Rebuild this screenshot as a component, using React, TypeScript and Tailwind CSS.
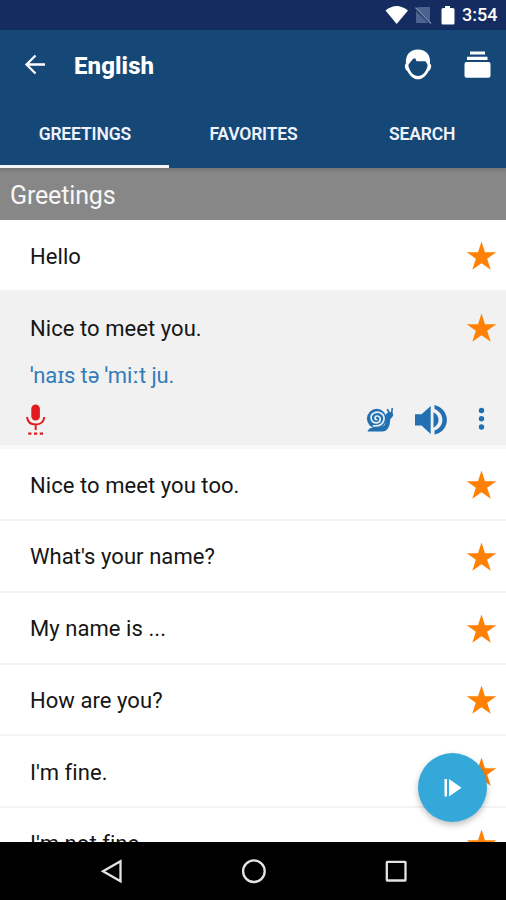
import React from "react";

const Star = () => (
  <svg className="h-[30px] w-[31px] shrink-0" viewBox="0 0 31 30">
    <path fill="#ff8106" d="M15.5 0.5 19 11.2H30.3L21.2 17.7 24.7 28.8 15.5 22.2 6.3 28.8 9.8 17.7 0.7 11.2H12Z" />
  </svg>
);

const StatusBar = () => (
  <div className="flex h-[30px] items-center justify-end bg-[#152c60] pr-[9px]">
    <svg className="h-[30px] w-[76px]" viewBox="382 0 76 30">
      <path fill="#fff" d="M385.5 10.5Q396.500 1.500 408 10.500L396.700 24Z" />
      <path fill="#4d638f" d="M430 7V21L417 8.500 418.500 7ZM416 11 428.500 23H416Z" />
      <path d="M415.500 7.500 431 23.500" stroke="#7488ab" strokeWidth="1.500" />
      <path fill="#fff" d="M445 6h5v2h3q1.500 0 1.500 1.500v13.500q0 1.500-1.500 1.500h-10q-1.500 0-1.500-1.500v-13.500q0-1.500 1.500-1.500h2z" />
    </svg>
    <span className="ml-[4px] w-[35px] whitespace-nowrap text-[18px] font-medium leading-[32px] text-white">3:54</span>
  </div>
);

const AppBar = () => (
  <div className="flex h-[70px] items-center pl-[23px] pr-[15px] text-white">
    <svg className="h-[24px] w-[24px]" viewBox="0 0 24 24" fill="none" stroke="#fff" strokeWidth="2.300">
      <path d="M22 11.500H4M12.500 2.500 3.500 11.500 12.500 20.500" />
    </svg>
    <h1 className="ml-[27px] pt-[2px] text-[24px] font-extrabold tracking-[0.1px]">English</h1>
    <svg className="ml-auto h-[32px] w-[30px]" viewBox="403 49 30 32">
      <path fill="#fff" fillRule="evenodd" d="M418 49.500C426 49.500 430.800 55 430 63.500Q432 65.500 430.700 68.500 430 70.500 428.300 71.500C426 76 422.500 79.300 418 79.300S410 76 407.700 71.500Q406 70.500 405.300 68.500 404 65.500 406 63.500C405.200 55 410 49.500 418 49.500ZM412.500 59.500 408.500 64.500Q408 66 409.500 69C411 73 414 76 418 76S425 73 426.500 69Q428 66 427.500 64.500L425.500 61.300H416.500L415.500 58.500 413.500 58.500Z" />
    </svg>
    <svg className="ml-[30px] h-[28px] w-[28px]" viewBox="463 51 28 28">
      <path fill="#fff" d="M470 51.500h15v3h-15zM467 56.700h20.500v3.200H467z" />
      <rect x="464.500" y="62" width="26" height="15.700" rx="2" fill="#fff" />
    </svg>
  </div>
);

const Tabs = () => (
  <div className="grid h-[68px] grid-cols-3 text-center text-[17.500px] font-semibold leading-[68px] tracking-[-0.15px] text-[#eef2ff]">
    <div className="h-[68px] border-b-[3px] border-[#f4f5f7] pl-px"><span>GREETINGS</span></div>
    <div className="pl-px"><span>FAVORITES</span></div>
    <div className="pl-px"><span>SEARCH</span></div>
  </div>
);

const Snail = () => (
  <svg className="h-[28px] w-[30px]" viewBox="366 405 30 28">
    <path fill="#2270b2" d="M367.500 431.500Q368.500 428 373 427.500L384 426Q386.300 422 385.500 416 386 412.800 388 412.500L386.500 409.500 388 408.800 389.800 412 391 412 391.500 407.800 393 408 392.600 412.500Q394 415.500 391.800 417.500 389.800 418.500 390 421.500C389.700 427 387 431.500 382.500 431.500Z" />
    <circle cx="376.700" cy="418.600" r="9.800" fill="#2270b2" />
    <path fill="none" stroke="#e6eef4" strokeWidth="1.700" strokeLinecap="round" d="M376.600 419.600C374.200 419.200 374.500 415.800 377.300 416 381.500 416.300 381 422.500 376.800 422.800 370.500 423.200 369.300 415.500 374 413 379.500 410.200 385.200 414.700 383.800 420.200 382.800 424.200 379 426.300 373.500 425.800" />
  </svg>
);

const Mic = () => (
  <svg className="h-[34px] w-[22px]" viewBox="25 402 22 34">
    <rect x="31.300" y="404.500" width="8.600" height="16" rx="4.300" fill="#e21b20" />
    <path d="M27 417Q28 424.500 35.700 424.500T44.300 417M35.700 424.500V430" fill="none" stroke="#e21b20" strokeWidth="2" />
    <path d="M28.200 432.500h3.200v2.200h-3.200zM34 432.500h3.200v2.200h-3.200zM39.800 432.500h3.200v2.200h-3.200z" fill="#e21b20" />
  </svg>
);

const rows = [
  { text: "Nice to meet you too.", box: "h-[72px] pt-[2px]" },
  { text: "What's your name?", box: "h-[72px] pt-px" },
  { text: "My name is ...", box: "h-[72px] pt-px" },
  { text: "How are you?", box: "h-[71px] pt-px" },
  { text: "I'm fine.", box: "h-[72px] pt-[2px]" },
  { text: "I'm not fine.", box: "h-[72px] pt-px" },
];

const Row = ({ text, box }: { text: string; box: string }) => (
  <div className={`flex items-center justify-between border-b-2 border-[#f3f3f3] pl-[30px] pr-[9px] ${box}`}>
    <span className="text-[22px] tracking-[0.06px]">{text}</span>
    <Star />
  </div>
);

export default function App() {
  return (
    <div className="relative flex h-[900px] w-[506px] flex-col overflow-hidden bg-white font-['Roboto','Noto_Sans',sans-serif] text-[#151515]">
      <StatusBar />
      <header className="h-[138px] shrink-0 bg-[#154876]">
        <AppBar />
        <Tabs />
      </header>
      <div className="h-[52px] shrink-0 bg-[#878787] bg-gradient-to-b from-[#777777] to-[#878787] to-10% pl-[10px] text-[25px] leading-[55px] tracking-[-0.15px] text-[#f7f7f7]">
        <span>Greetings</span>
      </div>
      <main className="h-[622px] shrink-0 overflow-hidden">
        <Row text="Hello" box="h-[72px] pt-[2px]" />
        <section className="h-[157px] border-b-[4px] border-[#f8f8f8] bg-[#f1f1f1]">
          <div className="flex h-[72px] items-center justify-between pl-[30px] pr-[9px]">
            <span className="text-[22px] tracking-[0.06px]">Nice to meet you.</span>
            <Star />
          </div>
          <div className="h-[26px] pl-[30px] text-[22px] leading-[24px] tracking-[-0.15px] text-[#347cb9]">
            <span>ˈnaɪs tə ˈmiːt ju.</span>
          </div>
          <div className="flex h-[55px] items-center pl-[25px] pr-[20px] pt-[2px]">
            <Mic />
            <div className="ml-auto flex items-center">
              <Snail />
              <svg className="ml-[18px] h-[32px] w-[34px]" viewBox="414 403 34 32">
                <path fill="#2270b2" d="M415 414.300h6.500L430.700 406v28L421.500 425.500H415ZM433.500 412.200Q438.500 415 438.500 420T433.500 427.800ZM434.500 405C451 409 451 431 434.500 434.500V430.500C445 427 445 413 434.500 409Z" />
              </svg>
              <svg className="ml-[28px] h-[24px] w-[10px]" viewBox="476 408 10 24" fill="#2270b2">
                <circle cx="481.500" cy="411.500" r="2.700" />
                <circle cx="481.500" cy="419.800" r="2.700" />
                <circle cx="481.500" cy="428" r="2.700" />
              </svg>
            </div>
          </div>
        </section>
        {rows.map((r) => <Row key={r.text} {...r} />)}
      </main>
      <nav className="flex h-[58px] shrink-0 items-center bg-black">
        <svg className="h-[58px] w-[506px]" viewBox="0 842 506 58" fill="none" stroke="#e4e4e4" strokeWidth="2.300">
          <path d="M120.500 861.300V881.300L103 871.300Z" />
          <circle cx="253.900" cy="871.200" r="10.800" />
          <rect x="386.800" y="861.800" width="18.700" height="18.700" rx="0.500" />
        </svg>
      </nav>
      <button className="absolute left-[418px] top-[753px] flex h-[69px] w-[69px] items-center justify-center rounded-full bg-[#35a8da] shadow-[0_3px_6px_rgba(0,0,0,0.25)]">
        <svg className="h-[20px] w-[20px]" viewBox="443 778 20 20" fill="#fff">
          <path d="M444.500 779h2.500v17.500h-2.500zM449 779 461.500 787.700 449 796.500z" />
        </svg>
      </button>
    </div>
  );
}
